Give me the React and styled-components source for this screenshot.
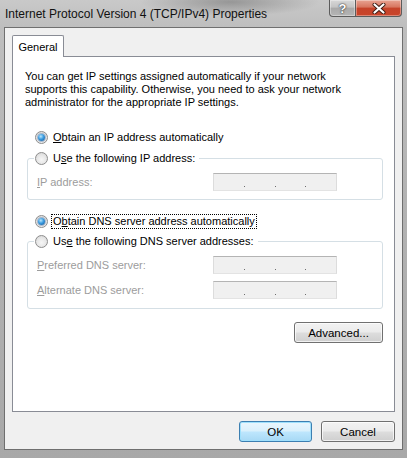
import React from "react";
import styled, { createGlobalStyle } from "styled-components";

const GlobalStyle = createGlobalStyle`
html, body {
  margin: 0;
  padding: 0;
  overflow: hidden;
  background: #a9a9a9;
}
`;

const Window = styled.div`
width: 407px;
height: 458px;
display: flex;
flex-direction: column;
box-sizing: border-box;
padding: 0 4px 8px 4px;
background:
  radial-gradient(ellipse 90px 14px at 230px 2px, rgba(90, 90, 90, 0.45), rgba(90, 90, 90, 0) 100%),
  linear-gradient(180deg, #c9c9c9 0px, #bebebe 27px, #b3b3b3 200px, #a8a8a8 458px);
font-family: "Liberation Sans", Arial, sans-serif;
font-size: 11px;
color: #000;
`;

const TitleBar = styled.div`
height: 27px;
display: flex;
align-items: flex-start;
margin-right: 1px;
`;

const Title = styled.div`
flex: 1;
padding: 7px 0 0 1px;
font-size: 12px;
color: #111;
white-space: nowrap;
`;

const CaptionButtons = styled.div`
display: flex;
`;

const CaptionButton = styled.div`
height: 17px;
width: ${(p) => p.w}px;
box-sizing: border-box;
display: flex;
align-items: center;
justify-content: center;
border: 1px solid #5c5c5c;
border-top: none;
border-radius: ${(p) => (p.close ? "0 0 4px 0" : "0 0 0 4px")};
${(p) => (p.close ? "border-left: none;" : "")}
background: ${(p) =>
  p.close
    ? "linear-gradient(180deg, #e8a493 0%, #d7755f 45%, #c5432a 50%, #c9452b 100%)"
    : "linear-gradient(180deg, #d8d8d8 0%, #c4c4c4 45%, #a9a9a9 50%, #b5b5b5 100%)"};
box-shadow: inset 0 0 0 1px rgba(255, 255, 255, 0.35);
color: #fff;
font-weight: bold;
font-size: 13px;
text-shadow: 0 0 2px #333, 0 0 1px #222;
`;

const Client = styled.div`
flex: 1;
display: flex;
flex-direction: column;
background: #f0f0f0;
border: 1px solid #6f6f6f;
box-sizing: border-box;
padding: 7px 7px 7px 7px;
`;

const TabStrip = styled.div`
display: flex;
`;

const Tab = styled.div`
position: relative;
z-index: 1;
width: 52px;
height: 22px;
box-sizing: border-box;
border: 1px solid #898c95;
border-bottom: none;
border-radius: 2px 2px 0 0;
background: #fff;
margin-bottom: -1px;
display: flex;
align-items: center;
justify-content: center;
padding-top: 1px;
`;

const Panel = styled.div`
flex: 1;
background: #fff;
border: 1px solid #898c95;
box-sizing: border-box;
display: flex;
flex-direction: column;
padding: 13px 11px 0 12px;
`;

const Intro = styled.div`
line-height: 13px;
`;

const RadioRow = styled.label`
display: flex;
align-items: center;
height: 15px;
margin-top: ${(p) => p.top || 0}px;
margin-left: ${(p) => p.left || 0}px;
`;

const RadioCircle = styled.span`
width: 13px;
height: 13px;
box-sizing: border-box;
border-radius: 50%;
border: 1px solid #8d8d8d;
background: radial-gradient(circle at 50% 60%, #f6f6f6 0%, #e6e6e6 55%, #cfcfcf 100%);
display: flex;
align-items: center;
justify-content: center;
margin-right: 4px;
flex-shrink: 0;
&::after {
  content: "";
  display: ${(p) => (p.checked ? "block" : "none")};
  width: 7px;
  height: 7px;
  border-radius: 50%;
  background: radial-gradient(circle at 40% 35%, #b9e6fb 0%, #3a9be0 45%, #14508f 100%);
  box-shadow: 0 0 0 1px rgba(40, 90, 150, 0.35);
}
`;

const RadioText = styled.span`
padding: 0 1px;
line-height: 13px;
outline: ${(p) => (p.focused ? "1px dotted #000" : "none")};
outline-offset: 0;
`;

const Key = styled.u`
text-decoration: underline;
`;

const GroupBox = styled.fieldset`
margin: ${(p) => p.top || 0}px 0 0 2px;
padding: 7px 0 ${(p) => p.bottom || 8}px 9px;
border: 1px solid #d5dfe5;
border-radius: 3px;
display: flex;
flex-direction: column;
gap: 7px;
min-width: 0;
`;

const Legend = styled.legend`
margin-left: -3px;
padding: 0 3px 0 1px;
`;

const FieldRow = styled.div`
display: grid;
grid-template-columns: 176px 124px;
align-items: center;
height: 18px;
`;

const FieldLabel = styled.span`
color: #9c9c9c;
`;

const IpBox = styled.div`
width: 124px;
height: 18px;
box-sizing: border-box;
border: 1px solid;
border-color: #b4b4b4 #dcdcdc #e3e3e3 #dcdcdc;
background: #f0f0f0;
display: flex;
justify-content: space-evenly;
align-items: flex-end;
padding-bottom: 3px;
`;

const Dot = styled.span`
width: 1px;
height: 1px;
background: #6d6d6d;
`;

const ButtonRow = styled.div`
display: flex;
justify-content: flex-end;
gap: 9px;
margin-top: ${(p) => p.top || 0}px;
padding-right: ${(p) => p.right || 0}px;
`;

const Button = styled.button`
width: ${(p) => p.w}px;
height: 21px;
box-sizing: border-box;
border-radius: 3px;
font-family: "Liberation Sans", Arial, sans-serif;
font-size: 11.5px;
color: #000;
padding: 0;
border: 1px solid ${(p) => (p.primary ? "#3c7fb1" : "#707070")};
background: ${(p) =>
  p.primary
    ? "linear-gradient(180deg, #eaf6fd 0%, #d9f0fc 48%, #bee6fd 52%, #a7d9f5 100%)"
    : "linear-gradient(180deg, #f2f2f2 0%, #ebebeb 48%, #dddddd 52%, #cfcfcf 100%)"};
box-shadow: inset 0 0 0 1px ${(p) => (p.primary ? "#9fe0fc" : "rgba(255,255,255,0.7)")};
`;

function Radio({ checked, focused, children, top, left }) {
  return (
    <RadioRow top={top} left={left}>
      <RadioCircle checked={checked} />
      <RadioText focused={focused}>{children}</RadioText>
    </RadioRow>
  );
}

function IpField() {
  return (
    <IpBox>
      <Dot />
      <Dot />
      <Dot />
    </IpBox>
  );
}

function CloseGlyph() {
  return (
    <svg width="14" height="11" viewBox="0 0 14 11">
      <path d="M2.5 1.5 L11.5 9.5 M11.5 1.5 L2.5 9.5" stroke="#3b1a12" strokeWidth="4" strokeLinecap="round" />
      <path d="M2.5 1.5 L11.5 9.5 M11.5 1.5 L2.5 9.5" stroke="#fff" strokeWidth="2.2" strokeLinecap="round" />
    </svg>
  );
}

export default function App() {
  return (
    <>
      <GlobalStyle />
      <Window>
        <TitleBar>
          <Title>Internet Protocol Version 4 (TCP/IPv4) Properties</Title>
          <CaptionButtons>
            <CaptionButton w={27}>?</CaptionButton>
            <CaptionButton w={46} close>
              <CloseGlyph />
            </CaptionButton>
          </CaptionButtons>
        </TitleBar>
        <Client>
          <TabStrip>
            <Tab>General</Tab>
          </TabStrip>
          <Panel>
            <Intro>
              You can get IP settings assigned automatically if your network
              <br />
              supports this capability. Otherwise, you need to ask your network
              <br />
              administrator for the appropriate IP settings.
            </Intro>
            <Radio checked top={21} left={10}>
              <Key>O</Key>btain an IP address automatically
            </Radio>
            <GroupBox top={6}>
              <Legend>
                <Radio>
                  U<Key>s</Key>e the following IP address:
                </Radio>
              </Legend>
              <FieldRow>
                <FieldLabel>
                  <Key>I</Key>P address:
                </FieldLabel>
                <IpField />
              </FieldRow>
            </GroupBox>
            <Radio checked focused top={14} left={10}>
              O<Key>b</Key>tain DNS server address automatically
            </Radio>
            <GroupBox top={5} bottom={9}>
              <Legend>
                <Radio>
                  Us<Key>e</Key> the following DNS server addresses:
                </Radio>
              </Legend>
              <FieldRow>
                <FieldLabel>
                  <Key>P</Key>referred DNS server:
                </FieldLabel>
                <IpField />
              </FieldRow>
              <FieldRow>
                <FieldLabel>
                  <Key>A</Key>lternate DNS server:
                </FieldLabel>
                <IpField />
              </FieldRow>
            </GroupBox>
            <ButtonRow top={13}>
              <Button w={89}>Advanced...</Button>
            </ButtonRow>
          </Panel>
          <ButtonRow top={9} right={0}>
            <Button w={73} primary>OK</Button>
            <Button w={74}>Cancel</Button>
          </ButtonRow>
        </Client>
      </Window>
    </>
  );
}
